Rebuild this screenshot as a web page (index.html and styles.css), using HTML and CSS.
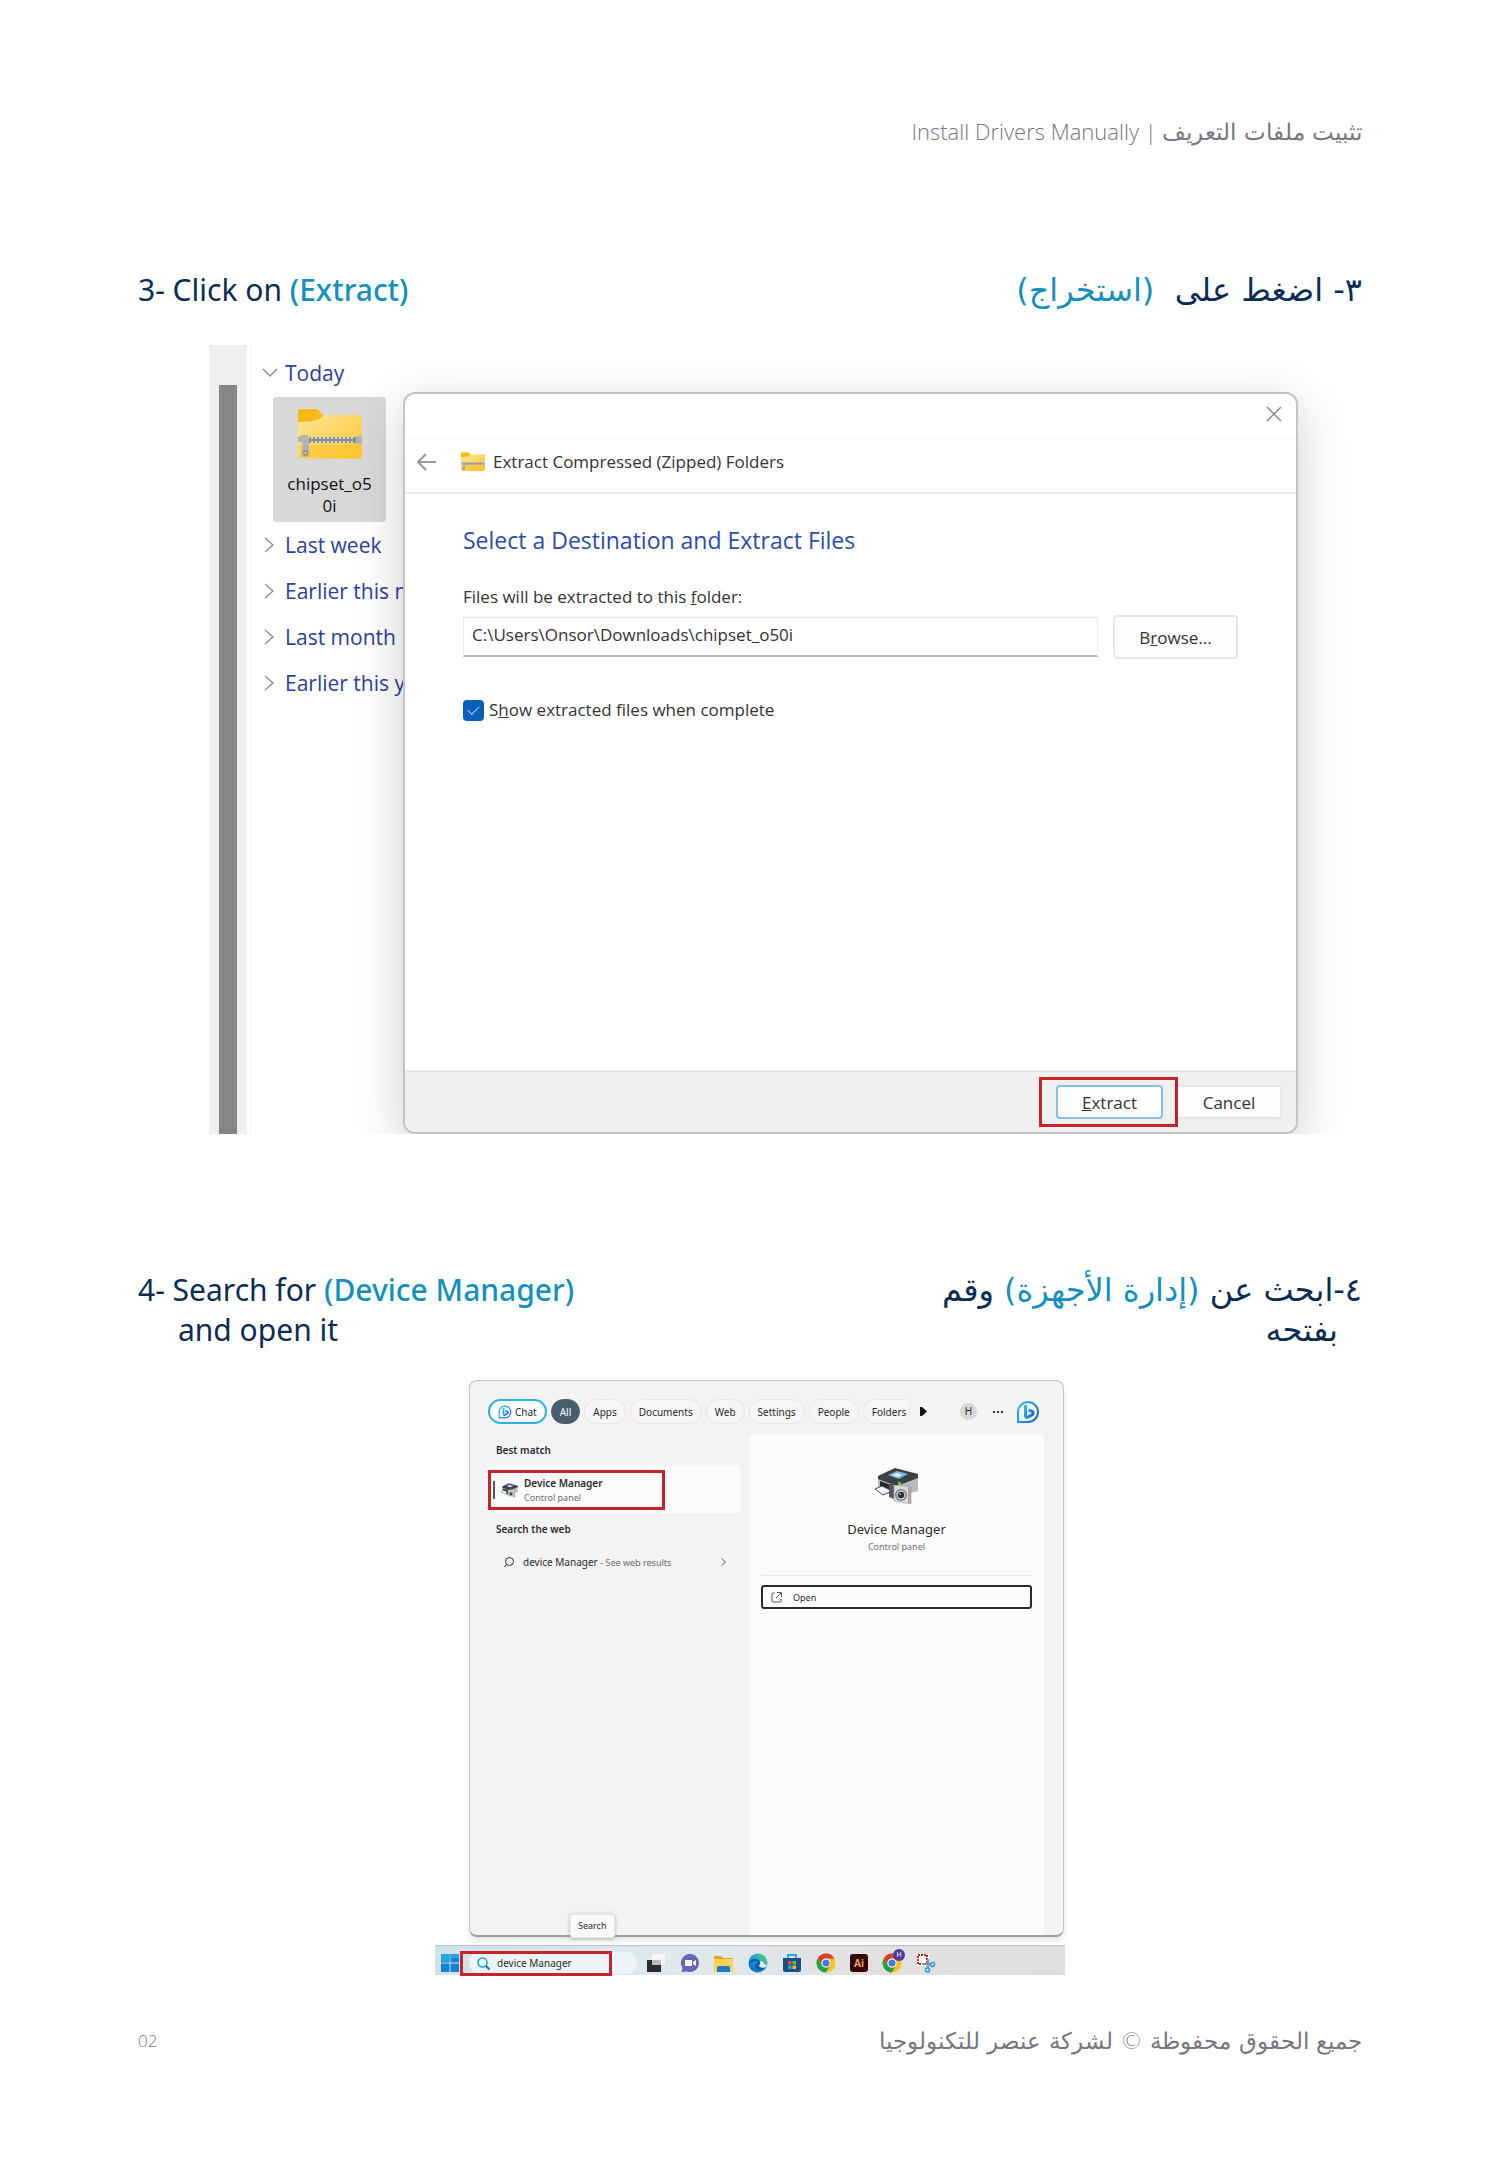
FILE: index.html
```html
<!DOCTYPE html>
<html lang="en">
<head>
  <meta charset="UTF-8">
  <meta name="viewport" content="width=device-width, initial-scale=1.0">
  <link rel="stylesheet" href="styles.css">
  <title>Install Drivers Manually</title>
</head>
<body>

<!-- Shared icons -->
<svg class="sprite" aria-hidden="true">
  <defs>
    <linearGradient id="folderFill" x1="0" y1="0" x2="1" y2="1">
      <stop offset="0" stop-color="#ffe596"/>
      <stop offset="1" stop-color="#fdc62f"/>
    </linearGradient>
    <linearGradient id="bingFill" x1="0" y1="0" x2="1" y2="1">
      <stop offset="0" stop-color="#37bdf5"/>
      <stop offset="1" stop-color="#1b5fd8"/>
    </linearGradient>
    <linearGradient id="edgeFill" x1="0" y1="1" x2="1" y2="0">
      <stop offset="0" stop-color="#0c59a4"/>
      <stop offset="0.5" stop-color="#1b9de2"/>
      <stop offset="1" stop-color="#5fe05a"/>
    </linearGradient>
  </defs>
  <symbol id="zip" viewBox="0 0 64 50">
    <path d="M0 3a3 3 0 0 1 3-3h14c3 0 4 2 7 5l2 2v12H0z" fill="#fbb917"/>
    <path d="M0 13c10 0 19-1 23-4 2-2 3-3 6-3h32a3 3 0 0 1 3 3v38a3 3 0 0 1-3 3H3a3 3 0 0 1-3-3z" fill="url(#folderFill)"/>
    <path d="M2 36h60v12H2z" fill="#fcc42c" opacity=".5"/>
    <path d="M8 28h50v6H8z" fill="#8d8d8d"/>
    <path d="M9 29h48M9 33h48" stroke="#d8d8d8" stroke-width="2" stroke-dasharray="2 2"/>
    <path d="M58 27h6v8h-6zM0 28l4-2h6v7H0zM4 31h7v17H4z" fill="#b4b4b4"/>
    <path d="M6 42h3v4H6z" fill="#f5d26e" stroke="#777"/>
  </symbol>
  <symbol id="bing" viewBox="0 0 24 24">
    <path d="M2 22V12A10 10 0 1 1 12 22z" fill="#f4faff" stroke="url(#bingFill)" stroke-width="2"/>
    <path d="M9.500 5v10.500c0 1.500 1.300 2.200 2.600 1.500l4-2.300c1.400-.9 1.300-2.600 0-3.300l-3.500-1.600" fill="none" stroke="url(#bingFill)" stroke-width="3" stroke-linejoin="round"/>
  </symbol>
  <symbol id="chevron" viewBox="0 0 10 16">
    <path d="M1 1l8 7-8 7" fill="none" stroke="currentColor" stroke-width="1.500"/>
  </symbol>
  <symbol id="device" viewBox="0 0 44 37">
    <path d="M3 9L20 1l23 6v16l-22 6L3 20z" fill="#b9bbbd"/>
    <path d="M3 8L20 0l23 6v4L22 18 3 11z" fill="#3b4045"/>
    <path d="M13 7l9-4 11 3-9 5z" fill="#79b4e8"/>
    <path d="M17 7l5-2 5 2-4 2z" fill="#e4f3ff"/>
    <path d="M5 13l11 4v8L5 20z" fill="#25282b"/>
    <path d="M0 21l7-3 8 4v2l-7 3z" fill="#f1f2f3" stroke="#4b4f53"/>
    <path d="M14 16l5-1v16l-5-2z" fill="#54585c"/>
    <path d="M23 14h3v3h-3z" fill="#62cc3a"/>
    <path d="M19 17l17 2v17l-17-3z" fill="#dcdcda" stroke="#9c9c9c" stroke-width=".6"/>
    <path d="M33 19h3v17l-3-1z" fill="#a8a8a6"/>
    <circle cx="26" cy="27" r="6" fill="#7b7f83"/>
    <circle cx="26" cy="27" r="4.500" fill="#d2d5d8"/>
    <circle cx="26" cy="27" r="3.200" fill="#2a3138"/>
    <circle cx="25" cy="26" r="1" fill="#79b4e8"/>
  </symbol>
  <symbol id="chrome" viewBox="0 0 20 20">
    <circle cx="10" cy="10" r="9.500" fill="#fbc116"/>
    <path d="M1.800 5.200A9.500 9.500 0 0 1 18.300 5.400H10A4.600 4.600 0 0 0 6 12.300z" fill="#dc3c31"/>
    <path d="M1.800 5.200A9.500 9.500 0 0 0 9.900 19.500L14 12.300a4.600 4.600 0 0 1-8 0z" fill="#27a04b"/>
    <circle cx="10" cy="10" r="4.600" fill="#fff"/>
    <circle cx="10" cy="10" r="3.600" fill="#3b7de8"/>
  </symbol>
</svg>

<header class="page-header">
  Install Drivers Manually | <span lang="ar" class="ar-small">تثبيت ملفات التعريف</span>
</header>

<main>
  <!-- Step 3 -->
  <section class="step">
    <div class="step-title">
      <h2>3- Click on <b>(Extract)</b></h2>
      <h2 lang="ar" dir="rtl">٣- اضغط على&nbsp; <b>(استخراج)</b></h2>
    </div>

    <div class="explorer">
      <div class="scroll-track"><div class="scroll-thumb"></div></div>
      <div class="files">
        <div class="group"><svg class="open" viewBox="0 0 16 10"><path d="M1 1l7 7 7-7" fill="none" stroke="currentColor" stroke-width="1.500"/></svg>Today</div>
        <div class="file">
          <svg><use href="#zip"/></svg>
          <span>chipset_o5<br>0i</span>
        </div>
        <div class="group"><svg><use href="#chevron"/></svg>Last week</div>
        <div class="group"><svg><use href="#chevron"/></svg>Earlier this month</div>
        <div class="group"><svg><use href="#chevron"/></svg>Last month</div>
        <div class="group"><svg><use href="#chevron"/></svg>Earlier this year</div>
      </div>

      <div class="dialog">
        <div class="dialog-bar">
          <button class="icon-btn" aria-label="Close"><svg width="16" height="16" viewBox="0 0 16 16"><path d="M1 1l14 14M15 1L1 15" stroke="#8a8a8a" stroke-width="1.500"/></svg></button>
        </div>
        <div class="dialog-head">
          <button class="icon-btn" aria-label="Back"><svg width="20" height="18" viewBox="0 0 20 18"><path d="M9 1L1 9l8 8M1 9h18" fill="none" stroke="#999" stroke-width="2"/></svg></button>
          <svg class="zip-small"><use href="#zip"/></svg>
          <span>Extract Compressed (Zipped) Folders</span>
        </div>
        <div class="dialog-body">
          <h3>Select a Destination and Extract Files</h3>
          <label for="folder">Files will be extracted to this <u>f</u>older:</label>
          <div class="path-row">
            <input type="text" id="folder" value="C:\Users\Onsor\Downloads\chipset_o50i">
            <button class="btn browse">B<u>r</u>owse...</button>
          </div>
          <div class="check-row">
            <input type="checkbox" id="show" checked>
            <label for="show">S<u>h</u>ow extracted files when complete</label>
          </div>
        </div>
        <div class="dialog-foot">
          <div class="mark"><button class="btn primary"><u>E</u>xtract</button></div>
          <button class="btn cancel">Cancel</button>
        </div>
      </div>
    </div>
  </section>

  <!-- Step 4 -->
  <section class="step step-four">
    <div class="step-title">
      <h2>4- Search for <b>(Device Manager)</b><br><span class="second">and open it</span></h2>
      <h2 lang="ar" dir="rtl">٤-ابحث عن <b>(إدارة الأجهزة)</b> وقم<br><span class="second">بفتحه</span></h2>
    </div>

    <div class="desktop">
      <div class="search-window">
        <div class="tabs">
          <button class="pill chat"><svg><use href="#bing"/></svg>Chat</button>
          <button class="pill active">All</button>
          <button class="pill">Apps</button>
          <button class="pill">Documents</button>
          <button class="pill">Web</button>
          <button class="pill">Settings</button>
          <button class="pill">People</button>
          <button class="pill cut">Folders</button>
          <button class="icon-btn next" aria-label="More tabs"><svg width="7" height="9" viewBox="0 0 7 9"><path d="M0 0h2l5 4.500L2 9H0z" fill="#111"/></svg></button>
          <span class="avatar">H</span>
          <button class="icon-btn dots" aria-label="Options"><svg width="10" height="2" viewBox="0 0 10 2"><path d="M0 0h2v2H0zM4 0h2v2H4zM8 0h2v2H8z" fill="#333"/></svg></button>
          <svg class="bing-big"><use href="#bing"/></svg>
        </div>
        <div class="columns">
          <div class="results">
            <h4>Best match</h4>
            <div class="best">
              <div class="mark best-mark">
                <span class="accent"></span>
                <svg><use href="#device"/></svg>
                <p><strong>Device Manager</strong><br><small>Control panel</small></p>
              </div>
            </div>
            <h4>Search the web</h4>
            <a class="web" href="#">
              <svg width="11" height="11" viewBox="0 0 11 11"><path d="M4 7L1 10" stroke="#333"/><circle cx="6.500" cy="4.500" r="4" fill="none" stroke="#333"/></svg>
              <span>device Manager <small>- See web results</small></span>
              <svg class="go"><use href="#chevron"/></svg>
            </a>
          </div>
          <div class="preview">
            <svg class="device-big"><use href="#device"/></svg>
            <h3>Device Manager</h3>
            <small>Control panel</small>
            <hr>
            <button class="open-btn">
              <svg width="11" height="11" viewBox="0 0 11 11"><path d="M4 1H2a1 1 0 0 0-1 1v7a1 1 0 0 0 1 1h7a1 1 0 0 0 1-1V7M6 .5h4.500V5M10 1L5 6" fill="none" stroke="#555"/></svg>
              Open
            </button>
          </div>
        </div>
        <span class="tooltip">Search</span>
      </div>

      <div class="taskbar">
        <svg width="18" height="18" viewBox="0 0 18 18"><path d="M0 0h8.500v8.500H0zM9.500 0H18v8.500H9.500zM0 9.500h8.500V18H0zM9.500 9.500H18V18H9.500z" fill="#1683d2"/><path d="M0 0h8.500v8.500H0zM9.500 0H18v4H9.500z" fill="#27a4e4"/></svg>
        <div class="task-search">
          <svg width="13" height="13" viewBox="0 0 13 13"><circle cx="5.500" cy="5.500" r="4.500" fill="none" stroke="#1a9fc2" stroke-width="1.500"/><path d="M9 9l3.500 3.500" stroke="#1b62c4" stroke-width="2"/></svg>
          <input type="text" aria-label="Search" value="device Manager">
          <span class="mark search-mark"></span>
        </div>
        <div class="apps">
          <svg viewBox="0 0 20 20"><path d="M1 7h14v12H1z" fill="#2b2b2b"/><path d="M6 1h13v11H6z" fill="#f6f6f6"/><path d="M6 7h9v5H6z" fill="#bbb"/></svg>
          <svg viewBox="0 0 20 20"><path d="M10 1a9 9 0 1 1-3 17.500L1.500 19l1-4A9 9 0 0 1 10 1z" fill="#6468b8"/><path d="M5 7h7v6H5zM13 9l3-2v6l-3-2z" fill="#fff"/></svg>
          <svg viewBox="0 0 20 20"><path d="M0 3h7l2 2h10v14H0z" fill="#e5a51a"/><path d="M0 6h19v13H0z" fill="#fdd155"/><path d="M3 19v-4a2 2 0 0 1 2-2h9a2 2 0 0 1 2 2v4z" fill="#1a7ad0"/></svg>
          <svg viewBox="0 0 20 20"><circle cx="10" cy="10" r="9.500" fill="url(#edgeFill)"/><path d="M1 11c0-5 9-7 11-2 1 3-2 3 0 5 2 1 4 1 6-1-3 6-10 6-11 1 0-2 1-4 3-5-4-1-7 0-9 2z" fill="#0d5cab"/><path d="M12 9c1 3-2 3 0 5 2 1 4 1 6 0 2-2-1-3-2-3-1-3-3-4-4-2z" fill="#e8f4f8"/></svg>
          <svg viewBox="0 0 20 20"><path d="M6 6V2h8v4" fill="none" stroke="#31a8e5" stroke-width="2"/><path d="M1 5h18v12a2 2 0 0 1-2 2H3a2 2 0 0 1-2-2z" fill="#17518c"/><path d="M6 8h3.500v3.500H6z" fill="#f05028"/><path d="M10.500 8H14v3.500h-3.500z" fill="#7fba2c"/><path d="M6 12.500h3.500V16H6z" fill="#27a4e4"/><path d="M10.500 12.500H14V16h-3.500z" fill="#fcba1b"/></svg>
          <svg><use href="#chrome"/></svg>
          <span class="ai">Ai</span>
          <span class="profile"><svg><use href="#chrome"/></svg><i>H</i></span>
          <svg viewBox="0 0 20 20"><path d="M1 1h12v12H1z" fill="#fff"/><path d="M2 2h9v9H2z" fill="none" stroke="#c22a22" stroke-width="2" stroke-dasharray="2 1"/><path d="M6 11h9M12 6v9" stroke="#8a9298" stroke-width="2"/><circle cx="16.500" cy="11.500" r="2" fill="none" stroke="#1b9de2" stroke-width="1.500"/><circle cx="11.500" cy="17" r="2" fill="none" stroke="#1b9de2" stroke-width="1.500"/></svg>
        </div>
      </div>
    </div>
  </section>
</main>

<footer class="page-footer">
  <span class="page-number">02</span>
  <span lang="ar" dir="rtl" class="ar-small">جميع الحقوق محفوظة © لشركة عنصر للتكنولوجيا</span>
</footer>

</body>
</html>
```
FILE: styles.css
```css
* {
  box-sizing: border-box;
}

body {
  margin: 0;
  padding: 115px 138px 90px;
  background-color: #ffffff;
  color: #0b2d55;
  font-family: 'Noto Sans', 'Open Sans', 'DejaVu Sans', sans-serif;
}

h2, h3, h4, p {
  margin: 0;
  font-weight: 400;
}

button, input {
  font-family: inherit;
  font-size: inherit;
  color: inherit;
  margin: 0;
}

button {
  cursor: pointer;
}

.sprite {
  position: absolute;
  width: 0;
  height: 0;
}

.page-header {
  text-align: right;
  font-family: 'Open Sans', 'DejaVu Sans', sans-serif;
  font-size: 22px;
  font-weight: 300;
  line-height: 32px;
  color: #77777f;
}

.ar-small {
  font-family: 'DejaVu Sans', sans-serif;
  font-size: 23px;
  font-weight: 200;
}

/* Steps */
.step {
  margin-top: 122px;
}

.step-four {
  margin-top: 136px;
}

.step-title {
  display: flex;
  justify-content: space-between;
  margin-bottom: 35px;
}

.step-four .step-title {
  margin-bottom: 30px;
}

.step-title h2 {
  font-size: 30px;
  line-height: 40px;
}

.step-title h2[lang="ar"] {
  font-family: 'DejaVu Sans', sans-serif;
  font-size: 32px;
}

.step-title b {
  font-weight: 500;
  color: #158fbf;
}

.second {
  margin-inline-start: 40px;
}

[lang="ar"] .second {
  margin-inline-start: 24px;
}

.mark {
  border: 3px solid #c4242b;
}

.icon-btn {
  display: flex;
  padding: 0;
  border: none;
  background: none;
}

/* Explorer with the extract dialog */
.explorer {
  display: flex;
  margin-left: 71px;
  padding-right: 64px;
  overflow: hidden;
  font-family: 'Open Sans', sans-serif;
  font-size: 17px;
  color: #333333;
}

.scroll-track {
  display: flex;
  width: 38px;
  padding: 40px 10px 0;
  background-color: #efefef;
}

.scroll-thumb {
  flex: 1;
  background-color: #868686;
}

.files {
  width: 153px;
  margin-left: 3px;
  padding: 5px 0 0 11px;
  border-left: 1px solid #f4f4f4;
  overflow: hidden;
  white-space: nowrap;
}

.group {
  display: flex;
  align-items: center;
  gap: 7px;
  height: 46px;
  font-size: 21px;
  color: #2d409c;
}

.group svg {
  flex: none;
  width: 10px;
  height: 16px;
  margin: 0 4px 0 2px;
  color: #8f8f8f;
}

.group .open {
  width: 16px;
  height: 10px;
  margin: 0;
}

.file {
  display: flex;
  flex-direction: column;
  align-items: center;
  width: 113px;
  height: 125px;
  margin: 1px 0 0 11px;
  padding-top: 12px;
  border-radius: 3px;
  background-color: #d8d8d8;
  line-height: 22px;
  text-align: center;
  color: #111111;
}

.file svg {
  width: 64px;
  height: 50px;
  margin-bottom: 14px;
}

.dialog {
  position: relative;
  flex: 1;
  margin-top: 47px;
  border: 2px solid #c4c4c4;
  border-radius: 12px;
  background-color: #ffffff;
  box-shadow: 0 14px 50px rgba(0, 0, 0, 0.2);
}

.dialog-bar {
  display: flex;
  align-items: center;
  justify-content: flex-end;
  height: 45px;
  padding: 0 14px 4px 0;
  border-bottom: 1px solid #f6f6f6;
}

.dialog-head {
  display: flex;
  align-items: center;
  height: 55px;
  padding: 0 0 8px 12px;
  border-bottom: 2px solid #ededed;
}

.zip-small {
  width: 24px;
  height: 19px;
  margin: 0 8px 0 24px;
}

.dialog-body {
  min-height: 576px;
  padding: 30px 58px 0;
}

.dialog-body h3 {
  margin-bottom: 29px;
  font-size: 23px;
  line-height: 32px;
  color: #2b4cad;
}

.dialog-body label {
  display: block;
  line-height: 24px;
}

.path-row {
  display: flex;
  align-items: center;
  gap: 15px;
  margin-top: 6px;
}

.path-row input {
  flex: 1;
  height: 40px;
  padding: 0 8px 4px;
  border: 1px solid #ececec;
  border-bottom: 2px solid #bdbdbd;
}

.btn {
  height: 34px;
  border: 2px solid #e6e6e6;
  border-radius: 4px;
  background-color: #fdfdfd;
}

.browse {
  width: 125px;
  height: 44px;
}

.check-row {
  display: flex;
  align-items: center;
  gap: 5px;
  margin-top: 39px;
}

.check-row input {
  appearance: none;
  display: grid;
  place-items: center;
  width: 21px;
  height: 21px;
  border-radius: 4px;
  background-color: #0a5fb8;
}

.check-row input:checked::after {
  content: '';
  width: 10px;
  height: 5px;
  margin-bottom: 3px;
  border: solid #9cc6ee;
  border-width: 0 0 1px 1px;
  transform: rotate(-45deg);
}

.dialog-foot {
  display: flex;
  align-items: center;
  justify-content: flex-end;
  height: 62px;
  padding-right: 14px;
  border-top: 2px solid #e6e6e6;
  border-radius: 0 0 10px 10px;
  background-color: #efefef;
}

.dialog-foot .mark {
  padding: 5px 12px 5px 14px;
}

.primary {
  display: block;
  width: 107px;
  border-color: #86bfe8;
}

.cancel {
  width: 104px;
  border-left: none;
  border-radius: 0 4px 4px 0;
}

/* Windows search */
.desktop {
  max-width: 630px;
  margin: 0 auto;
  font-size: 10px;
  color: #2b2b2b;
}

.search-window {
  position: relative;
  margin: 0 1px 8px 34px;
  padding: 18px 19px 0 18px;
  border: 1px solid #c6c6c6;
  border-bottom: 2px solid #a0a0a0;
  border-radius: 8px;
  background-color: #f3f3f3;
  box-shadow: 0 4px 6px rgba(0, 0, 0, 0.1);
}

.tabs {
  display: flex;
  align-items: center;
  gap: 4px;
  height: 25px;
  padding-right: 4px;
}

.pill {
  display: flex;
  align-items: center;
  gap: 3px;
  height: 25px;
  padding: 0 8px;
  border: 1px solid #e6e6e6;
  border-radius: 13px;
  background-color: #f6f6f6;
}

.chat {
  border: 2px solid #2bb2e6;
  background-color: #ffffff;
}

.chat svg {
  width: 14px;
  height: 14px;
}

.active {
  border-color: #495e6c;
  background-color: #495e6c;
  color: #ffffff;
}

.cut {
  padding-right: 0;
  border-right: none;
  border-radius: 13px 0 0 13px;
}

.next {
  margin: 0 auto 0 10px;
}

.avatar {
  width: 17px;
  border-radius: 50%;
  background-color: #d8d8d8;
  line-height: 17px;
  text-align: center;
}

.dots {
  margin: 0 9px 0 12px;
}

.bing-big {
  width: 24px;
  height: 24px;
}

.columns {
  display: grid;
  grid-template-columns: 253fr 295fr;
  gap: 8px;
  margin-top: 10px;
}

.results h4 {
  padding-left: 8px;
  font-weight: 600;
  line-height: 32px;
}

.best {
  height: 47px;
  padding: 4px 0;
  border-radius: 4px;
  background-color: #fbfbfb;
}

.best-mark {
  display: flex;
  align-items: center;
  width: 70%;
  height: 40px;
}

.accent {
  width: 2px;
  height: 18px;
  margin: 0 6px 0 2px;
  background-color: #495e6c;
}

.best-mark svg {
  width: 17px;
  height: 15px;
  margin-right: 6px;
}

.best-mark p {
  line-height: 14px;
}

.best-mark strong {
  font-weight: 600;
}

small {
  font-size: 9px;
  color: #707070;
}

.web {
  display: flex;
  align-items: center;
  gap: 9px;
  height: 34px;
  padding: 0 15px;
  color: inherit;
  text-decoration: none;
}

.go {
  width: 5px;
  height: 8px;
  margin-left: auto;
}

.preview {
  display: flex;
  flex-direction: column;
  align-items: center;
  min-height: 501px;
  padding: 34px 12px 0;
  border-radius: 6px 6px 0 0;
  background-color: #fcfcfc;
}

.device-big {
  width: 44px;
  height: 37px;
}

.preview h3 {
  margin-top: 15px;
  font-size: 13px;
  line-height: 18px;
}

.preview small {
  line-height: 18px;
}

.preview hr {
  width: 100%;
  margin: 19px 0 9px;
  border: none;
  border-top: 1px solid #e8e8e8;
}

.open-btn {
  display: flex;
  align-items: center;
  gap: 11px;
  width: 100%;
  height: 24px;
  padding: 0 8px;
  border: 2px solid #2b2b2b;
  border-radius: 3px;
  background-color: #fcfcfc;
  font-size: 9px;
}

.tooltip {
  position: absolute;
  bottom: -3px;
  left: 100px;
  padding: 0 7px;
  border: 1px solid #e8e8e8;
  border-radius: 3px;
  background-color: #fafafa;
  box-shadow: 0 1px 4px rgba(0, 0, 0, 0.25);
  font-size: 9px;
  line-height: 22px;
}

.taskbar {
  display: flex;
  align-items: center;
  height: 30px;
  padding: 5px 0 0 6px;
  border-top: 1px solid #b9c6c8;
  background: linear-gradient(to right, #cfe2ea, #dfe9ec 40%, #e2e0df 70%, #dedede);
}

.task-search {
  position: relative;
  display: flex;
  align-items: center;
  gap: 7px;
  width: 168px;
  height: 22px;
  margin-left: 10px;
  padding-left: 8px;
  border-radius: 11px;
  background-color: #eef4f6;
}

.task-search input {
  width: 120px;
  padding: 0;
  border: none;
  background: none;
}

.search-mark {
  position: absolute;
  top: -1px;
  left: -9px;
  width: 152px;
  height: 25px;
}

.apps {
  display: flex;
  align-items: center;
  gap: 14px;
  margin-left: 9px;
}

.apps svg {
  display: block;
  width: 20px;
  height: 20px;
}

.ai {
  width: 18px;
  border-radius: 3px;
  background-color: #330505;
  font-weight: 700;
  line-height: 18px;
  text-align: center;
  color: #f5a05a;
}

.profile {
  position: relative;
}

.profile i {
  position: absolute;
  top: -4px;
  right: -3px;
  width: 12px;
  border-radius: 50%;
  background-color: #5338a0;
  font-size: 7px;
  font-style: normal;
  line-height: 12px;
  text-align: center;
  color: #ffffff;
}

.page-footer {
  display: flex;
  justify-content: space-between;
  margin-top: 50px;
  line-height: 32px;
  color: #77777f;
}

.page-number {
  font-family: 'Open Sans', sans-serif;
  font-size: 17px;
  font-weight: 300;
}
```
